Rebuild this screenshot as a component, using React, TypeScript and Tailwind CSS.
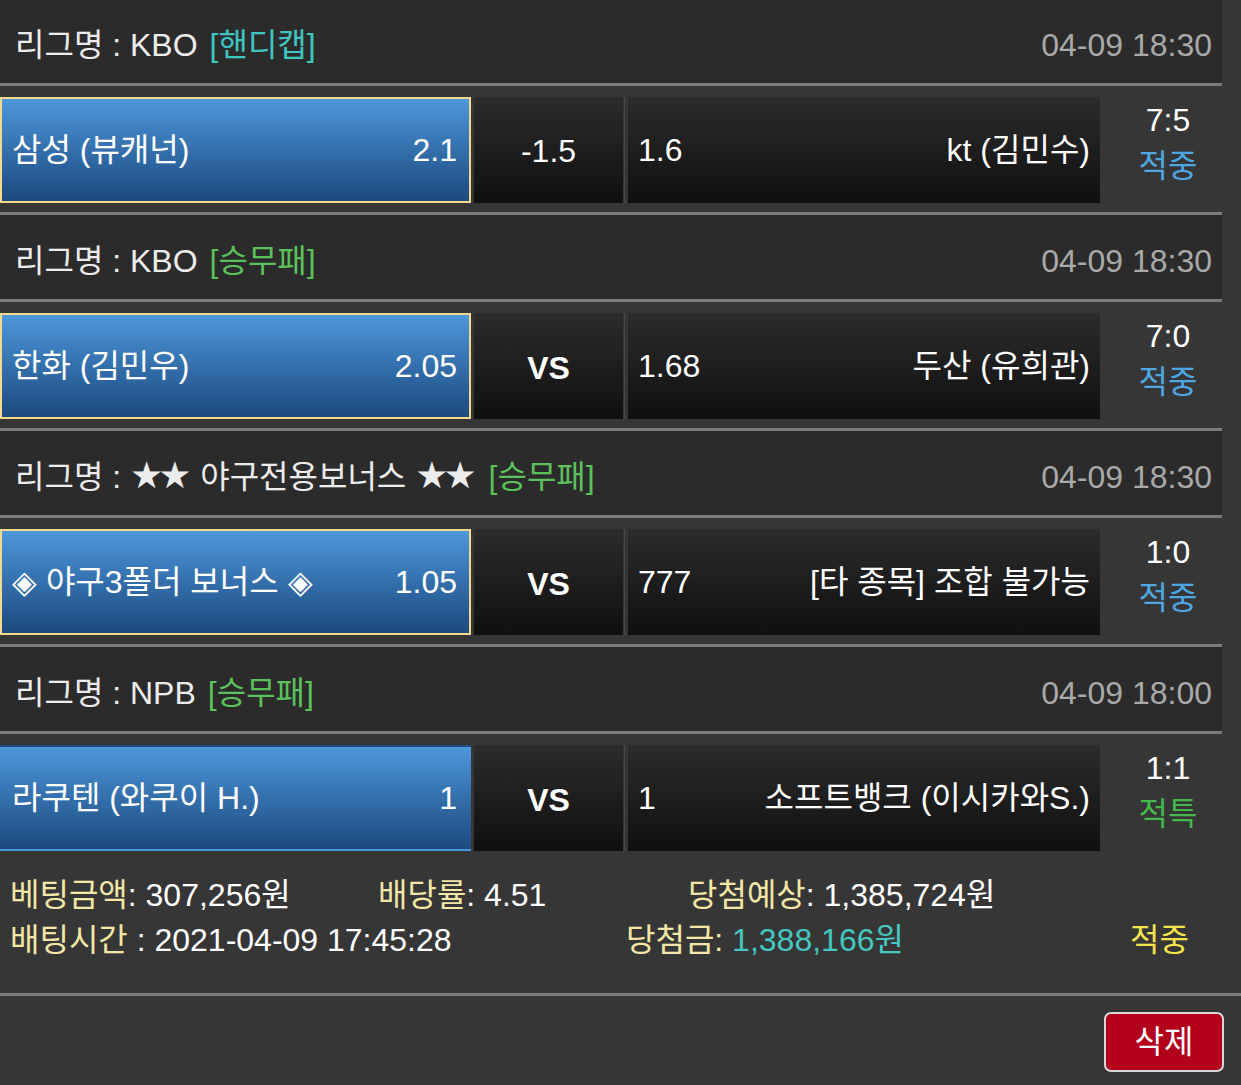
import React from "react";

type Bet = {
  league: React.ReactNode;
  type: string;
  typeColor: string;
  date: string;
  home: string;
  homeOdds: string;
  mid: string;
  midBold: boolean;
  awayOdds: string;
  away: string;
  selected: boolean;
  score: string;
  result: string;
  resultColor: string;
};

const Stars = () => (
  <span
    style={{ fontFamily: "'DejaVu Sans', sans-serif" }}
    className="text-[37px] tracking-[-5px] leading-none mr-[5px]"
  >
    ★★
  </span>
);

const bets: Bet[] = [
  {
    league: "리그명 : KBO",
    type: "[핸디캡]",
    typeColor: "text-[#3fc6c2]",
    date: "04-09 18:30",
    home: "삼성 (뷰캐넌)",
    homeOdds: "2.1",
    mid: "-1.5",
    midBold: false,
    awayOdds: "1.6",
    away: "kt (김민수)",
    selected: true,
    score: "7:5",
    result: "적중",
    resultColor: "text-[#4ea6e2]",
  },
  {
    league: "리그명 : KBO",
    type: "[승무패]",
    typeColor: "text-[#5cc05c]",
    date: "04-09 18:30",
    home: "한화 (김민우)",
    homeOdds: "2.05",
    mid: "VS",
    midBold: true,
    awayOdds: "1.68",
    away: "두산 (유희관)",
    selected: true,
    score: "7:0",
    result: "적중",
    resultColor: "text-[#4ea6e2]",
  },
  {
    league: (
      <>
        리그명 : <Stars /> 야구전용보너스 <Stars />
      </>
    ),
    type: "[승무패]",
    typeColor: "text-[#5cc05c]",
    date: "04-09 18:30",
    home: "◈ 야구3폴더 보너스 ◈",
    homeOdds: "1.05",
    mid: "VS",
    midBold: true,
    awayOdds: "777",
    away: "[타 종목] 조합 불가능",
    selected: true,
    score: "1:0",
    result: "적중",
    resultColor: "text-[#4ea6e2]",
  },
  {
    league: "리그명 : NPB",
    type: "[승무패]",
    typeColor: "text-[#5cc05c]",
    date: "04-09 18:00",
    home: "라쿠텐 (와쿠이 H.)",
    homeOdds: "1",
    mid: "VS",
    midBold: true,
    awayOdds: "1",
    away: "소프트뱅크 (이시카와S.)",
    selected: false,
    score: "1:1",
    result: "적특",
    resultColor: "text-[#43b84b]",
  },
];

function BetBlock({ bet, first }: { bet: Bet; first: boolean }) {
  return (
    <div>
      <div
        className={
          first
            ? "w-[1222px] h-[86px] border-b-[3px] border-[#7b7b7b] bg-[#2b2b2b] flex items-center justify-between pl-[15px] pr-[10px] pt-[7px]"
            : "w-[1222px] h-[90px] border-y-[3px] border-[#7b7b7b] bg-[#2b2b2b] flex items-center justify-between pl-[15px] pr-[10px] pt-[7px]"
        }
      >
        <div className="flex items-center text-[32px] text-[#ececec] whitespace-pre">
          <span>{bet.league}</span>
          <span className={"ml-[12px] " + bet.typeColor}>{bet.type}</span>
        </div>
        <div className="text-[32px] text-[#a9a9a9]">{bet.date}</div>
      </div>
      <div className="pt-[11px] pb-[9px] flex gap-[3px]">
        <div
          className={
            (bet.selected ? "border-[#f2d98c] " : "border-transparent ") +
            "w-[471px] h-[106px] border-2 bg-gradient-to-b from-[#4d97db] to-[#1c4a7f] flex items-center justify-between pl-[10px] pr-[12px] text-white text-[32px]"
          }
        >
          <span>{bet.home}</span>
          <span>{bet.homeOdds}</span>
        </div>
        <div
          className={
            "w-[149px] h-[106px] bg-gradient-to-b from-[#2c2c2c] to-[#101010] flex items-center justify-center text-white text-[32px] " +
            (bet.midBold ? "font-bold pt-[4px]" : "pt-[2px]")
          }
        >
          {bet.mid}
        </div>
        <div className="w-[1px] h-[106px] bg-[#474747] -ml-[2px]"></div>
        <div className="w-[472px] h-[106px] bg-gradient-to-b from-[#2c2c2c] to-[#101010] flex items-center justify-between pl-[10px] pr-[10px] text-white text-[32px]">
          <span>{bet.awayOdds}</span>
          <span>{bet.away}</span>
        </div>
        <div className="w-[136px] h-[106px] flex flex-col items-center text-[32px] leading-[46px] -ml-[3px]">
          <span className="text-white">{bet.score}</span>
          <span className={bet.resultColor}>{bet.result}</span>
        </div>
      </div>
    </div>
  );
}

export default function App() {
  return (
    <div
      className="w-[1241px] h-[1085px] bg-[#363636] overflow-hidden"
      style={{ fontFamily: "'Liberation Sans', 'Noto Sans CJK KR', sans-serif" }}
    >
      {bets.map((b, i) => (
        <BetBlock key={i} bet={b} first={i === 0} />
      ))}
      <div className="pt-[13px] pb-[30px] px-[10px] text-[32px] leading-[45px]">
        <div className="flex">
          <div className="w-[368px]">
            <span className="text-[#f3e6a6]">베팅금액</span>
            <span className="text-white">: 307,256원</span>
          </div>
          <div className="w-[310px]">
            <span className="text-[#f3e6a6]">배당률</span>
            <span className="text-white">: 4.51</span>
          </div>
          <div>
            <span className="text-[#f3e6a6]">당첨예상</span>
            <span className="text-white">: 1,385,724원</span>
          </div>
        </div>
        <div className="flex">
          <div className="w-[616px]">
            <span className="text-[#f3e6a6]">배팅시간</span>
            <span className="text-white"> : 2021-04-09 17:45:28</span>
          </div>
          <div className="w-[504px]">
            <span className="text-[#f3e6a6]">당첨금: </span>
            <span className="text-[#44c8c0]">1,388,166원</span>
          </div>
          <div className="text-[#f4e34c]">적중</div>
        </div>
      </div>
      <div className="border-t-[3px] border-[#7b7b7b] flex justify-end pt-[16px] pr-[17px]">
        <button className="w-[120px] h-[60px] rounded-[7px] border-2 border-[#d8d8d8] bg-[#b3001b] text-white text-[32px] flex items-center justify-center">
          삭제
        </button>
      </div>
    </div>
  );
}
